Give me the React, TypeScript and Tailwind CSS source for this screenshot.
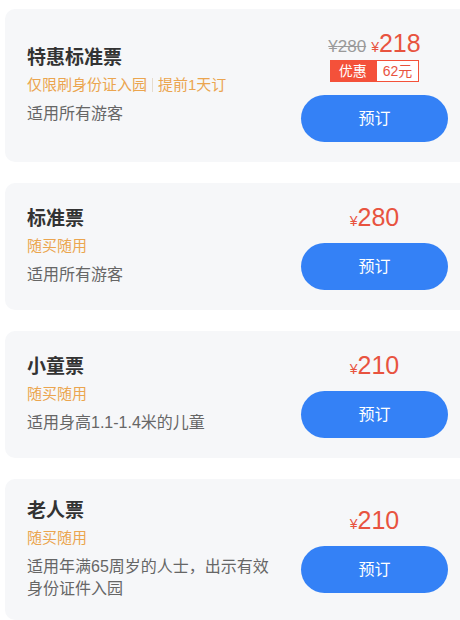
import React from "react";

type Ticket = {
  title: string;
  tags: string[];
  desc: string;
  price: string;
  original?: string;
  discount?: string;
};

const tickets: Ticket[] = [
  {
    title: "特惠标准票",
    tags: ["仅限刷身份证入园", "提前1天订"],
    desc: "适用所有游客",
    price: "218",
    original: "280",
    discount: "62元",
  },
  { title: "标准票", tags: ["随买随用"], desc: "适用所有游客", price: "280" },
  { title: "小童票", tags: ["随买随用"], desc: "适用身高1.1-1.4米的儿童", price: "210" },
  {
    title: "老人票",
    tags: ["随买随用"],
    desc: "适用年满65周岁的人士，出示有效身份证件入园",
    price: "210",
  },
];

function Card({ t }: { t: Ticket }) {
  return (
    <div className="flex items-center gap-[24px] rounded-[10px] bg-[#f6f7f9] py-[20px] pl-[22px] pr-[27px]">
      <div className="min-w-0 flex-1">
        <div className="text-[19px] font-bold leading-[24px] text-[#333333]">{t.title}</div>
        <div className="mt-[4px] flex items-center text-[15px] leading-[22px] text-[#eba54f]">
          {t.tags.map((tag, i) => (
            <React.Fragment key={tag}>
              {i > 0 && <span className="mx-[5px] inline-block h-[14px] w-px bg-[#e6dccd]" />}
              <span>{tag}</span>
            </React.Fragment>
          ))}
        </div>
        <div className="mt-[7px] text-[16px] leading-[22px] text-[#666666]">{t.desc}</div>
      </div>
      <div className="flex w-[147px] shrink-0 flex-col items-center">
        <div className="flex h-[28px] items-baseline whitespace-nowrap leading-[28px]">
          {t.original && (
            <span className="mr-[5px] text-[17px] text-[#9a9a9a] line-through">¥{t.original}</span>
          )}
          <span className="text-[14px] text-[#e8533f]">¥</span>
          <span className="text-[25px] text-[#e8533f]">{t.price}</span>
        </div>
        {t.discount && (
          <div className="mt-[3px] flex h-[22px] items-stretch text-[14px] leading-[20px]">
            <span className="flex items-center bg-[#f4513a] px-[9px] text-white">优惠</span>
            <span className="flex items-center border border-[#f4513a] bg-white px-[6px] text-[#e8533f]">
              {t.discount}
            </span>
          </div>
        )}
        <button
          className={`${t.discount ? "mt-[13px]" : "mt-[12px]"} flex h-[47px] w-[147px] items-center justify-center rounded-full bg-[#3481f6] text-[16px] text-white`}
        >
          预订
        </button>
      </div>
    </div>
  );
}

export default function App() {
  return (
    <div
      className="h-[620px] w-[460px] overflow-hidden bg-white"
      style={{ fontFamily: '"Liberation Sans", "Noto Sans CJK SC", sans-serif' }}
    >
      <div className="ml-[5px] flex w-[470px] flex-col gap-[21px] pt-[9px]">
        {tickets.map((t) => (
          <Card key={t.title} t={t} />
        ))}
      </div>
    </div>
  );
}
